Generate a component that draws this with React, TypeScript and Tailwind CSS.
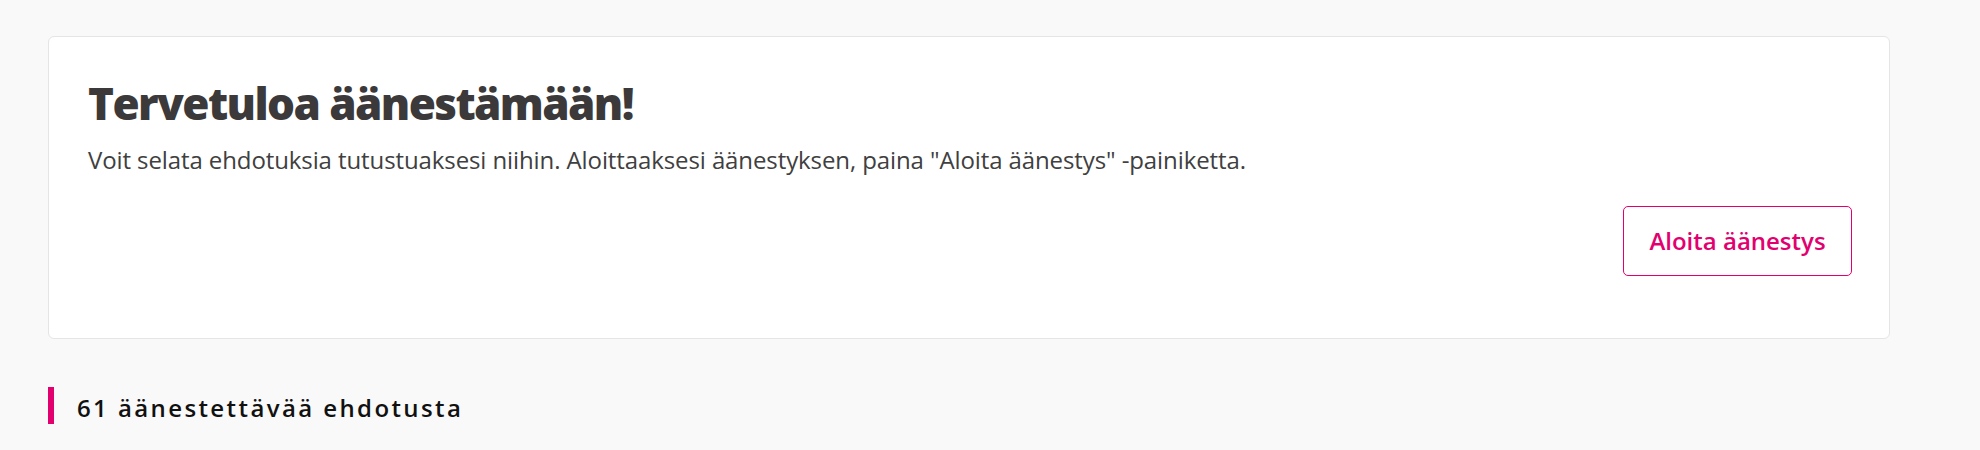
import React from "react";

export default function App() {
  return (
    <div className="min-h-screen bg-[#f9f9f9] pl-12 pt-9" style={{ fontFamily: '"Open Sans", "Noto Sans", sans-serif' }}>
      <div className="w-[1842px] rounded-md border border-[#e5e5e5] bg-white pl-[39px] pr-[37px] pt-[39px] pb-[62px]">
        <h1 className="m-0 text-[44px] font-extrabold leading-[54px] tracking-[-1.6px] text-[#3c393b]">
          Tervetuloa äänestämään!
        </h1>
        <p className="mt-[14px] text-[24px] leading-[32px] tracking-[-0.1px] text-[#404040]">
          Voit selata ehdotuksia tutustuaksesi niihin. Aloittaaksesi äänestyksen, paina "Aloita äänestys" -painiketta.
        </p>
        <div className="mt-[30px] flex justify-end">
          <button className="flex h-[70px] w-[229px] items-center justify-center rounded-[5px] border border-[#e2006f] bg-white text-[24px] font-semibold text-[#e2006f]">
            Aloita äänestys
          </button>
        </div>
      </div>
      <div className="mt-12 flex items-start">
        <div className="h-[37px] w-[6px] bg-[#e2006f]" />
        <h2 className="ml-[23px] pt-[2px] text-[24px] font-semibold leading-[37px] tracking-[2.4px] text-[#111111]">61 äänestettävää ehdotusta</h2>
      </div>
    </div>
  );
}
